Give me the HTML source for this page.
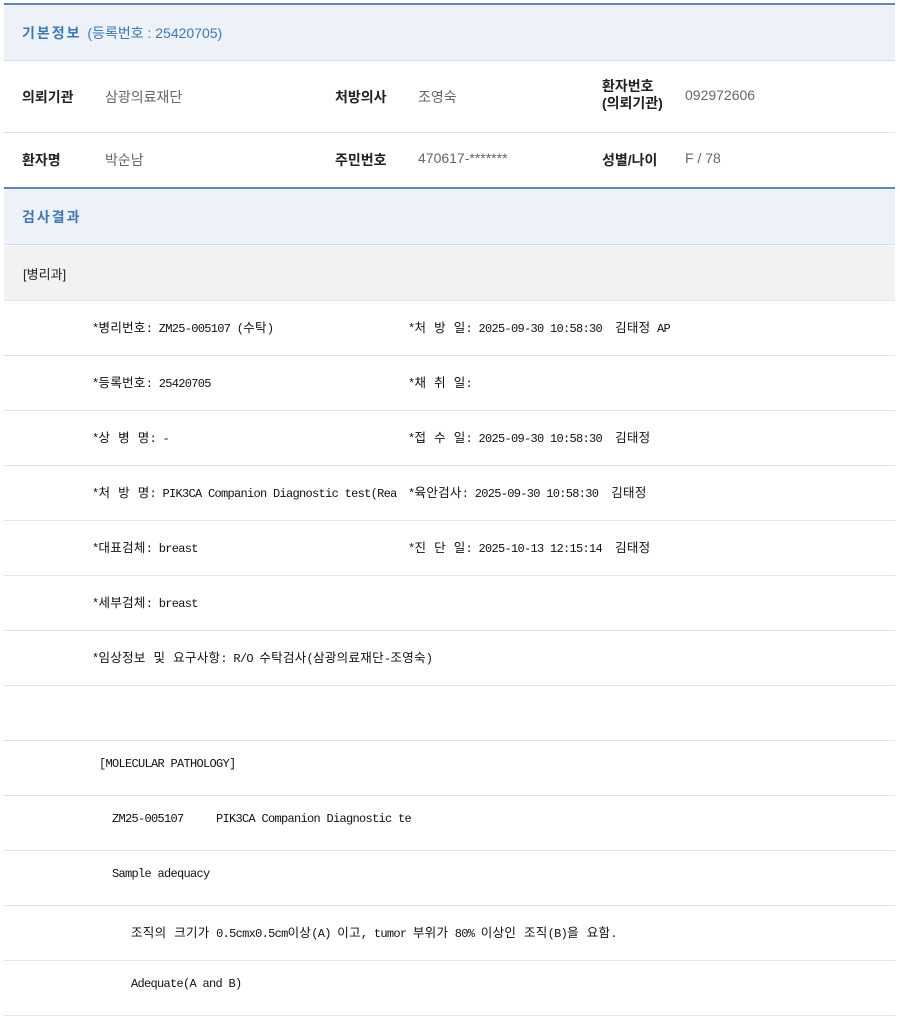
<!DOCTYPE html>
<html><head><meta charset="utf-8"><style>
*{margin:0;padding:0;box-sizing:border-box}
body{width:900px;height:1019px;background:#fff;position:relative;overflow:hidden;font-family:"Liberation Sans","Noto Sans CJK KR",sans-serif;}
.a{position:absolute;white-space:pre}
.hd{position:absolute;left:4px;width:891px;background:#edf2f8;border-top:2px solid #5a87b8;border-bottom:1px solid #d5dfe9}
.ln{position:absolute;left:4px;width:891px;height:1px;background:#e3e3e3}
.ht{color:#3d78b5;font-size:14px;font-weight:bold;letter-spacing:2px}
.lb{font-size:14px;font-weight:bold;color:#222}
.v{font-size:14px;color:#666}
.m{font-family:"Liberation Mono","Noto Sans CJK KR",monospace;font-size:12px;color:#111;letter-spacing:-0.7px}
.m b{font-weight:normal;font-size:12.5px;letter-spacing:0.3px}
</style></head><body>
<div class="hd" style="top:3px;height:58px"></div>
<div class="a ht" style="left:22px;top:23px">기본정보 <span style="font-weight:normal;letter-spacing:0">(등록번호 : 25420705)</span></div>
<div class="a lb" style="left:22px;top:87px">의뢰기관</div>
<div class="a v" style="left:105px;top:87px">삼광의료재단</div>
<div class="a lb" style="left:335px;top:87px">처방의사</div>
<div class="a v" style="left:418px;top:87px">조영숙</div>
<div class="a lb" style="left:602px;top:78px;line-height:17px">환자번호
(의뢰기관)</div>
<div class="a v" style="left:685px;top:87px">092972606</div>
<div class="ln" style="top:132px"></div>
<div class="a lb" style="left:22px;top:150px">환자명</div>
<div class="a v" style="left:105px;top:150px">박순남</div>
<div class="a lb" style="left:335px;top:150px">주민번호</div>
<div class="a v" style="left:418px;top:150px">470617-*******</div>
<div class="a lb" style="left:602px;top:150px">성별/나이</div>
<div class="a v" style="left:685px;top:150px">F / 78</div>
<div class="hd" style="top:187px;height:58px"></div>
<div class="a ht" style="left:22px;top:207px">검사결과</div>
<div style="position:absolute;left:4px;top:246px;width:891px;height:54px;background:#f2f2f2"></div>
<div class="a" style="left:23px;top:264px;font-size:13px;color:#222">[병리과]</div>
<div class="ln" style="top:300px"></div><div class="ln" style="top:355px"></div><div class="ln" style="top:410px"></div><div class="ln" style="top:465px"></div><div class="ln" style="top:520px"></div><div class="ln" style="top:575px"></div><div class="ln" style="top:630px"></div><div class="ln" style="top:685px"></div><div class="ln" style="top:740px"></div><div class="ln" style="top:795px"></div><div class="ln" style="top:850px"></div><div class="ln" style="top:905px"></div><div class="ln" style="top:960px"></div><div class="ln" style="top:1015px"></div>
<div class="a m" style="left:92px;top:317px">*<b>병리번호</b>: ZM25-005107 (<b>수탁</b>)</div>
<div class="a m" style="left:408px;top:317px">*<b>처 방 일</b>: 2025-09-30 10:58:30  <b>김태정</b> AP</div>
<div class="a m" style="left:92px;top:372px">*<b>등록번호</b>: 25420705</div>
<div class="a m" style="left:408px;top:372px">*<b>채 취 일</b>:</div>
<div class="a m" style="left:92px;top:427px">*<b>상 병 명</b>: -</div>
<div class="a m" style="left:408px;top:427px">*<b>접 수 일</b>: 2025-09-30 10:58:30  <b>김태정</b></div>
<div class="a m" style="left:92px;top:482px">*<b>처 방 명</b>: PIK3CA Companion Diagnostic test(Rea</div>
<div class="a m" style="left:408px;top:482px">*<b>육안검사</b>: 2025-09-30 10:58:30  <b>김태정</b></div>
<div class="a m" style="left:92px;top:537px">*<b>대표검체</b>: breast</div>
<div class="a m" style="left:408px;top:537px">*<b>진 단 일</b>: 2025-10-13 12:15:14  <b>김태정</b></div>
<div class="a m" style="left:92px;top:592px">*<b>세부검체</b>: breast</div>
<div class="a m" style="left:92px;top:647px">*<b>임상정보 및 요구사항</b>: R/O <b>수탁검사</b>(<b>삼광의료재단</b>-<b>조영숙</b>)</div>
<div class="a m" style="left:99px;top:757px">[MOLECULAR PATHOLOGY]</div>
<div class="a m" style="left:112px;top:812px">ZM25-005107     PIK3CA Companion Diagnostic te</div>
<div class="a m" style="left:112px;top:867px">Sample adequacy</div>
<div class="a m" style="left:131px;top:922px"><b>조직의 크기가</b> 0.5cmx0.5cm<b>이상</b>(A) <b>이고</b>, tumor <b>부위가</b> 80% <b>이상인 조직</b>(B)<b>을 요함</b>.</div>
<div class="a m" style="left:131px;top:977px">Adequate(A and B)</div>
</body></html>
